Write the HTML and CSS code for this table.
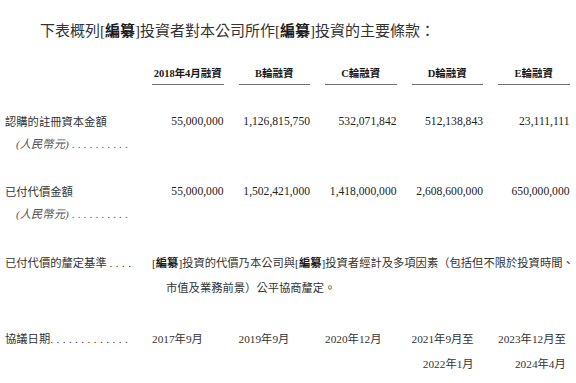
FILE: index.html
```html
<!DOCTYPE html>
<html lang="zh-Hant">
<head>
<meta charset="utf-8">
<link rel="stylesheet" href="styles.css">
</head>
<body>
<p class="intro">下表概列[<b>編纂</b>]投資者對本公司所作[<b>編纂</b>]投資的主要條款：</p>
<div class="terms">
  <div class="label"></div>
  <div class="head">2018年4月融資</div>
  <div class="head">B輪融資</div>
  <div class="head">C輪融資</div>
  <div class="head">D輪融資</div>
  <div class="head">E輪融資</div>

  <div class="label">認購的註冊資本金額<br><span class="sub">(人民幣元)<span class="dots">..........</span></span></div>
  <div class="num">55,000,000</div>
  <div class="num">1,126,815,750</div>
  <div class="num">532,071,842</div>
  <div class="num">512,138,843</div>
  <div class="num">23,111,111</div>

  <div class="label">已付代價金額<br><span class="sub">(人民幣元)<span class="dots">..........</span></span></div>
  <div class="num">55,000,000</div>
  <div class="num">1,502,421,000</div>
  <div class="num">1,418,000,000</div>
  <div class="num">2,608,600,000</div>
  <div class="num">650,000,000</div>

  <div class="label tall">已付代價的釐定基準 <span class="dots">....</span></div>
  <div class="desc">[<b>編纂</b>]投資的代價乃本公司與[<b>編纂</b>]投資者經計及多項因素（包括但不限於投資時間、<br>市值及業務前景）公平協商釐定。</div>

  <div class="label tall">協議日期<span class="dots">.............</span></div>
  <div class="date">2017年9月</div>
  <div class="date">2019年9月</div>
  <div class="date">2020年12月</div>
  <div class="date"><span class="range">2021年9月至<br>2022年1月</span></div>
  <div class="date"><span class="range">2023年12月至<br>2024年4月</span></div>
</div>
</body>
</html>
```

FILE: styles.css
```css
html, body {
  margin: 0;
  padding: 0;
  background: #ffffff;
}

body {
  font-family: "Liberation Serif", "Noto Sans CJK TC", serif;
  color: #333333;
}

b {
  font-weight: 700;
  color: #1a1a1a;
}

.intro {
  margin: 0;
  padding: 21px 0 0 40px;
  font-size: 15px;
  line-height: 20px;
  white-space: nowrap;
}

.terms {
  display: grid;
  grid-template-columns: 132px repeat(5, 71.5px);
  column-gap: 15px;
  row-gap: 26px;
  padding: 26px 0 0 5px;
  font-size: 11.3px;
  line-height: 22px;
}

.head {
  align-self: end;
  text-align: center;
  font-size: 10.5px;
  font-weight: 700;
  line-height: 14px;
  color: #1a1a1a;
  padding-bottom: 3px;
  border-bottom: 1.5px solid #6e6e6e;
  white-space: nowrap;
}

.label {
  white-space: nowrap;
}

.label.tall {
  line-height: 25px;
}

.sub {
  display: inline-block;
  padding-left: 11px;
  font-style: italic;
  color: #555555;
}

.sub .dots {
  margin-left: 3px;
  letter-spacing: 3.1px;
}

.dots {
  font-style: normal;
  letter-spacing: 3.4px;
}

.num {
  text-align: right;
  font-size: 11.6px;
  color: #222222;
  white-space: nowrap;
}

.desc {
  grid-column: 2 / 7;
  white-space: nowrap;
  padding-left: 14px;
  text-indent: -14px;
  line-height: 25px;
}

.date {
  white-space: nowrap;
  line-height: 25px;
}

.range {
  display: inline-block;
  text-align: right;
}
```
